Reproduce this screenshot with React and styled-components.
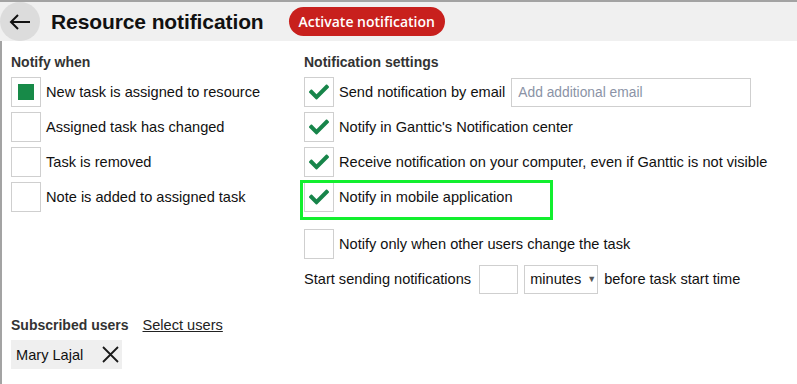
import React from "react";
import styled, { createGlobalStyle } from "styled-components";
import { FaCheck } from "react-icons/fa";

const GlobalStyle = createGlobalStyle`
  body {
    margin: 0;
    background: #ffffff;
    font-family: "Liberation Sans", Arial, sans-serif;
    color: #111;
  }
`;

const Frame = styled.div`
  width: 797px;
  height: 384px;
  box-sizing: border-box;
  border-top: 2px solid #a3a3a3;
  display: flex;
  flex-direction: column;
  overflow: hidden;
`;

const Header = styled.div`
  height: 39px;
  background: #f0f0f0;
  display: flex;
  align-items: center;
  flex-shrink: 0;
`;

const BackButton = styled.button`
  width: 40px;
  height: 39px;
  border-radius: 50%;
  border: none;
  padding: 0;
  background: #dcdcdc;
  display: flex;
  align-items: center;
  justify-content: center;
  cursor: pointer;
`;

const Title = styled.h1`
  margin: 0 0 0 11px;
  font-size: 21px;
  font-weight: 700;
  color: #111;
  letter-spacing: -0.1px;
`;

const ActivateButton = styled.button`
  margin-left: 25px;
  height: 29px;
  padding: 0 10px;
  border: none;
  border-radius: 15px;
  background: #c8201d;
  color: #fff;
  font-family: "Open Sans", sans-serif;
  font-weight: 600;
  font-size: 14px;
  cursor: pointer;
`;

const Body = styled.div`
  flex: 1;
  border-left: 2px solid #a3a3a3;
  padding: 12px 0 0 9px;
  display: flex;
  flex-direction: column;
`;

const Columns = styled.div`
  display: grid;
  grid-template-columns: 293px 1fr;
`;

const Column = styled.div`
  display: flex;
  flex-direction: column;
  position: relative;
`;

const Heading = styled.div`
  font-size: 14px;
  font-weight: 700;
  color: #333;
  line-height: 18px;
  margin-bottom: 1px;
`;

const Row = styled.div`
  display: flex;
  align-items: center;
  height: 30px;
  margin-top: ${(p) => p.$gap || 5}px;
  font-size: 14.6px;
  white-space: nowrap;
  &:first-of-type {
    margin-top: 0;
  }
`;

const Box = styled.div`
  width: 30px;
  height: 30px;
  box-sizing: border-box;
  border: 1px solid #cfcfcf;
  background: #fff;
  display: flex;
  align-items: center;
  justify-content: center;
  margin-right: 5px;
  flex-shrink: 0;
`;

const Filled = styled.div`
  width: 16px;
  height: 16px;
  background: #178a48;
`;

const EmailInput = styled.input`
  margin-left: 6px;
  width: 240px;
  height: 29px;
  box-sizing: border-box;
  border: 1px solid #cfcfcf;
  padding: 0 6px;
  font-family: "Liberation Sans", Arial, sans-serif;
  font-size: 13.8px;
  &::placeholder {
    color: #8b93a6;
  }
`;

const Highlight = styled.div`
  position: absolute;
  left: -4px;
  top: 127px;
  width: 253px;
  height: 40px;
  box-sizing: border-box;
  border: 3px solid #12ef2e;
  pointer-events: none;
`;

const SmallInput = styled.div`
  width: 39px;
  height: 29px;
  box-sizing: border-box;
  border: 1px solid #cfcfcf;
  margin: 0 6px 0 8px;
`;

const Select = styled.div`
  height: 29px;
  width: 74px;
  box-sizing: border-box;
  border: 1px solid #cfcfcf;
  display: flex;
  align-items: center;
  padding-left: 5px;
  gap: 6px;
  margin-right: 6px;
  span {
    font-size: 9px;
    color: #555;
  }
`;

const Subscribed = styled.div`
  margin-top: 22px;
  display: flex;
  align-items: center;
  gap: 14px;
`;

const LinkText = styled.a`
  font-size: 14.6px;
  color: #222;
  text-decoration: underline;
  cursor: pointer;
`;

const Chip = styled.div`
  margin-top: 6px;
  width: 111px;
  height: 29px;
  box-sizing: border-box;
  background: #efefef;
  display: flex;
  align-items: center;
  padding-left: 5px;
  font-size: 14.6px;
  gap: 19px;
`;

function Check({ on }) {
  return (
    <Box>
      {on && <FaCheck size={20} color="#17854a" />}
    </Box>
  );
}

export default function App() {
  return (
    <>
      <GlobalStyle />
      <Frame>
        <Header>
          <BackButton>
            <svg width="22" height="16" viewBox="0 0 22 16" fill="none" stroke="#111" strokeWidth="2">
              <path d="M21 8H2M9 1L2 8l7 7" />
            </svg>
          </BackButton>
          <Title>Resource notification</Title>
          <ActivateButton>Activate notification</ActivateButton>
        </Header>
        <Body>
          <Columns>
            <Column>
              <Heading>Notify when</Heading>
              <Row>
                <Box>
                  <Filled />
                </Box>
                New task is assigned to resource
              </Row>
              <Row>
                <Box />
                Assigned task has changed
              </Row>
              <Row>
                <Box />
                Task is removed
              </Row>
              <Row>
                <Box />
                Note is added to assigned task
              </Row>
            </Column>
            <Column>
              <Heading>Notification settings</Heading>
              <Row>
                <Check on />
                Send notification by email
                <EmailInput placeholder="Add additional email" />
              </Row>
              <Row>
                <Check on />
                Notify in Ganttic's Notification center
              </Row>
              <Row>
                <Check on />
                Receive notification on your computer, even if Ganttic is not visible
              </Row>
              <Row>
                <Check on />
                Notify in mobile application
              </Row>
              <Row $gap={17}>
                <Box />
                Notify only when other users change the task
              </Row>
              <Row>
                Start sending notifications
                <SmallInput />
                <Select>
                  minutes <span>▼</span>
                </Select>
                before task start time
              </Row>
              <Highlight />
            </Column>
          </Columns>
          <Subscribed>
            <Heading as="span" style={{ marginBottom: 0 }}>Subscribed users</Heading>
            <LinkText>Select users</LinkText>
          </Subscribed>
          <Chip>
            Mary Lajal
            <svg width="17" height="17" viewBox="0 0 17 17" stroke="#1a1a1a" strokeWidth="1.8">
              <path d="M1 1l15 15M16 1L1 16" />
            </svg>
          </Chip>
        </Body>
      </Frame>
    </>
  );
}
